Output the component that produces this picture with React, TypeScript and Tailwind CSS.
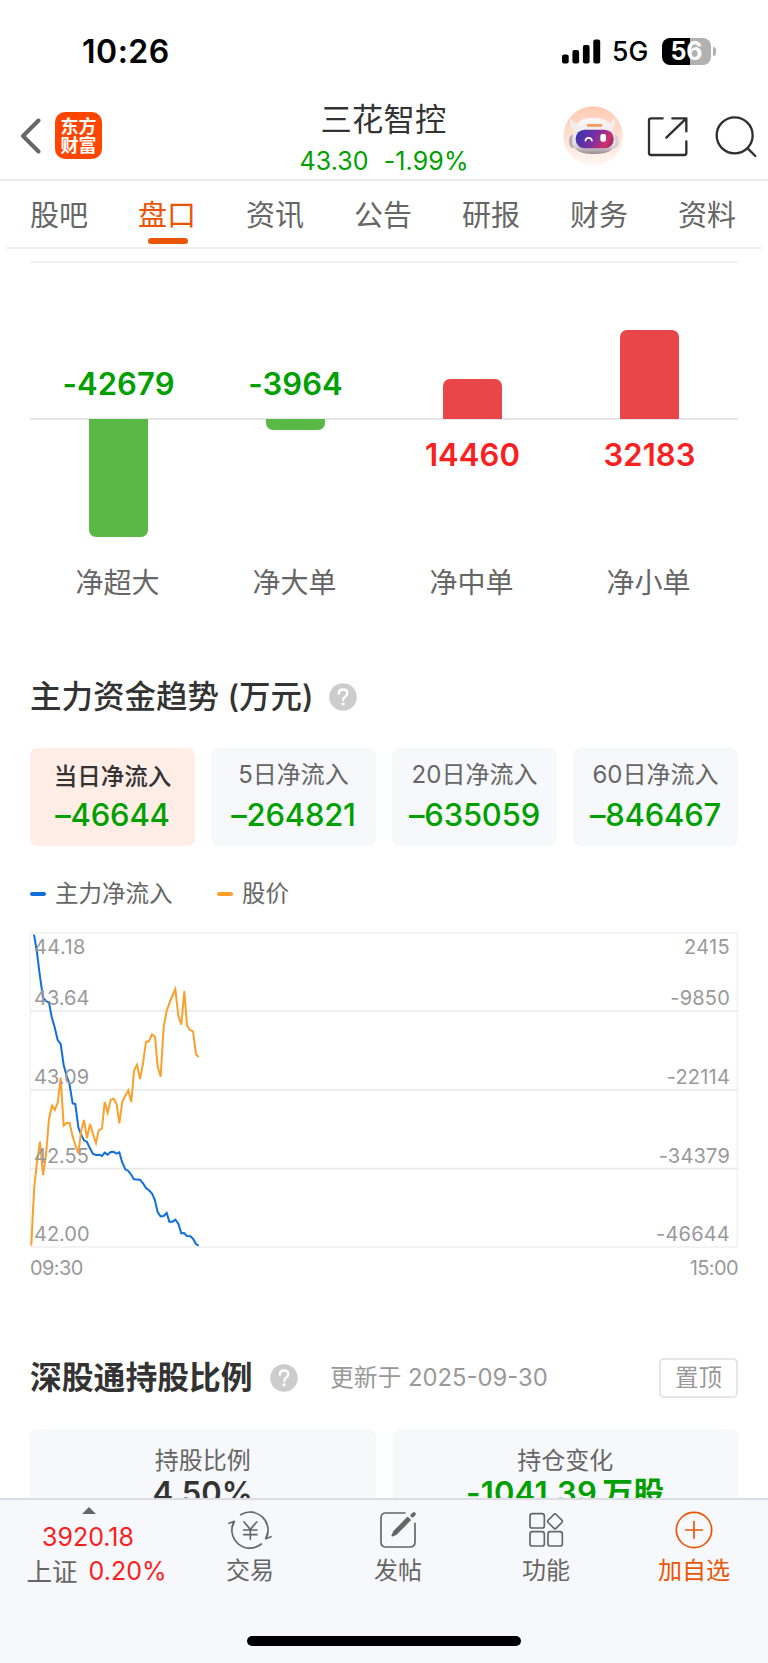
import React from "react";

const tabs = ["股吧", "盘口", "资讯", "公告", "研报", "财务", "资料"];

const flows = [
  { label: "净超大", value: "-42679", height: 118, negative: true },
  { label: "净大单", value: "-3964", height: 11, negative: true },
  { label: "净中单", value: "14460", height: 40, negative: false },
  { label: "净小单", value: "32183", height: 89, negative: false },
];

const periods = [
  { label: "当日净流入", value: "–46644", active: true },
  { label: "5日净流入", value: "–264821", active: false },
  { label: "20日净流入", value: "–635059", active: false },
  { label: "60日净流入", value: "–846467", active: false },
];

const axis = [
  ["43.64", "-9850"],
  ["43.09", "-22114"],
  ["42.55", "-34379"],
  ["42.00", "-46644"],
];

const inflow =
  "42,44 50,90 58,155 65,205 69,233 78,243 87,248 95,290 104,322 113,360 122,372 131,435 140,468 148,490 158,550 166,552 175,622 184,645 192,661 201,666 210,685 219,702 228,705 238,704 246,708 254,698 263,704 272,696 281,695 289,701 298,697 306,725 316,748 325,753 334,765 342,778 360,779 369,790 378,804 387,811 396,821 404,838 413,876 422,889 431,888 440,879 448,905 458,905 466,899 475,911 484,940 492,939 501,948 511,949 519,956 528,972 536,977";
const price =
  "34,977 38,890 43,800 51,725 60,665 69,765 78,705 87,596 96,557 104,570 113,549 122,473 131,617 140,609 149,609 158,650 166,675 175,700 184,630 192,600 201,654 210,612 219,642 228,669 236,631 246,625 254,546 263,578 272,540 281,536 290,553 298,610 307,545 316,527 325,511 334,546 342,452 351,434 360,477 369,430 378,365 387,364 396,343 405,350 413,440 422,470 431,320 440,273 448,250 457,228 466,207 475,287 484,314 493,213 501,317 510,330 519,334 528,403 536,411";

function StatusBar() {
  return (
    <div className="flex h-[96px] shrink-0 items-start pl-[82px] pr-[52px] pt-[31px] text-black">
      <div className="flex h-[42px] items-center text-[32px] font-semibold tracking-[0.5px]">10:26</div>
      <div className="ml-auto flex h-[40px] items-center">
        <svg width="39" height="25" viewBox="0 0 39 25" className="mr-[11px]">
          <rect x="0" y="15.5" width="6.7" height="9" rx="2" />
          <rect x="10.4" y="11" width="6.7" height="13.5" rx="2" />
          <rect x="20.9" y="6" width="6.7" height="18.5" rx="2" />
          <rect x="31.3" y="0.5" width="6.9" height="24" rx="2" />
        </svg>
        <span className="w-[50px] pt-[2px] text-[26.500px] font-medium">5G</span>
        <div className="flex h-[27px] w-[49px] items-center justify-center rounded-[8px] bg-linear-to-r from-black from-57% to-[#b1b1b1] to-57% text-[25px] font-bold leading-none text-white">
          56
        </div>
        <div className="ml-[2px] h-[9px] w-[3px] rounded-r-full bg-[#b1b1b1]" />
      </div>
    </div>
  );
}

function Robot() {
  return (
    <svg width="60" height="60" viewBox="0 0 180 180">
      <defs>
        <linearGradient id="halo" x1="0" y1="0" x2="0" y2="1">
          <stop offset="0" stopColor="#ffcab2" />
          <stop offset="0.7" stopColor="#ffe9df" />
          <stop offset="1" stopColor="#fff8f4" />
        </linearGradient>
        <linearGradient id="visor" x1="0" y1="0.3" x2="1" y2="0.6">
          <stop offset="0" stopColor="#3a35b0" />
          <stop offset="0.5" stopColor="#7a2fa0" />
          <stop offset="0.85" stopColor="#d02f70" />
          <stop offset="1" stopColor="#a02a60" />
        </linearGradient>
        <linearGradient id="shell" x1="0" y1="0" x2="0" y2="1">
          <stop offset="0" stopColor="#faf8f8" />
          <stop offset="0.75" stopColor="#e4dee1" />
          <stop offset="1" stopColor="#958c93" />
        </linearGradient>
      </defs>
      <circle cx="90" cy="90" r="89" fill="url(#halo)" />
      <path d="M23 36c-5 14-1 30 14 38l18-20c-16 0-27-6-32-18zM154 36c5 14 1 30-14 38l-18-20c14 0 27-6 32-18z" fill="#f2edee" />
      <ellipse cx="29" cy="106" rx="11" ry="20" fill="#b3acb4" />
      <ellipse cx="156" cy="106" rx="11" ry="20" fill="#d5ced3" />
      <path d="M36 72c4-26 24-37 54-37s56 11 60 37c10 20 10 44 2 54-14 16-40 18-60 18s-44-2-58-18c-10-12-8-34 2-54z" fill="url(#shell)" />
      <rect x="38" y="71" width="114" height="56" rx="27" fill="url(#visor)" />
      <rect x="72" y="54" width="46" height="8" rx="3" fill="#ee9b62" />
      <path d="M67 104c3-11 17-11 20 0" fill="none" stroke="#fff" strokeWidth="5" strokeLinecap="round" />
      <rect x="112" y="84" width="17" height="23" rx="6" fill="#fff" />
    </svg>
  );
}

function Header() {
  return (
    <header className="grid h-[85px] shrink-0 grid-cols-[1fr_240px_1fr] border-b-2 border-[#ececec]">
      <div className="flex h-[79px] items-center pl-[20px]">
        <svg width="22" height="36" viewBox="0 0 22 36" fill="none" stroke="#666" strokeWidth="4" strokeLinecap="round" strokeLinejoin="round">
          <path d="M18.5 2.5 3 18l15.500 15.500" />
        </svg>
        <div className="ml-[13px] flex h-[47px] w-[47px] flex-col items-center justify-center rounded-[10px] bg-[#ff4600] text-[18px] font-bold leading-[19px] text-white">
          <span>东方</span>
          <span>财富</span>
        </div>
      </div>
      <div className="flex flex-col items-center">
        <div className="flex h-[47px] items-center pr-[1px] pt-[1px] text-[31.300px] tracking-[0.2px] text-[#333]">三花智控</div>
        <div className="flex h-[37px] items-center gap-[15px] text-[25px] tracking-[0.1px] text-[#00a000]">
          <span>43.30</span>
          <span>-1.99%</span>
        </div>
      </div>
      <div className="flex h-[80px] items-center justify-end pr-[10px]">
        <Robot />
        <svg width="45" height="45" viewBox="285 53 135 135" className="ml-[22px]" fill="none" stroke="#2f2f2f" strokeWidth="7" strokeLinecap="round" strokeLinejoin="round">
          <path d="M338 66H303Q297 66 297 72V170Q297 176 303 176H403Q409 176 409 170V135M367 66H409V105M408 67 349 124" />
        </svg>
        <svg width="45" height="45" viewBox="488 50 135 135" className="ml-[23px]" fill="none" stroke="#2f2f2f" strokeWidth="7" strokeLinecap="round">
          <circle cx="553" cy="114" r="54" />
          <path d="m592 153 23 23" />
        </svg>
      </div>
    </header>
  );
}

function Tabs() {
  return (
    <nav className="mx-[6px] grid h-[68px] shrink-0 grid-cols-7 border-b-2 border-[#eee]">
      {tabs.map((t) => {
        const on = t === "盘口";
        return (
          <div key={t} className={"flex flex-col items-center text-[29px] " + (on ? "text-[#ea5504]" : "text-[#666]")}>
            <div className="flex h-[57px] items-center pr-[2px] pt-[12px]">{t}</div>
            {on && <div className="h-[6px] w-[40px] rounded-full bg-[#ea5504]" />}
          </div>
        );
      })}
    </nav>
  );
}

function FlowBars() {
  return (
    <section className="mx-[30px] mt-[12px] shrink-0 border-t-2 border-[#f2f2f2]">
      <div className="grid grid-cols-4">
        {flows.map((f) => (
          <div key={f.label} className="flex flex-col items-center text-[31px] font-semibold">
            <div className="flex h-[155px] w-full flex-col items-center justify-end">
              {f.negative ? (
                <div className="mb-[14px] flex h-[40px] items-center tracking-[0.1px] text-[#00a000]">{f.value}</div>
              ) : (
                <div className="relative top-px w-[59px] rounded-t-[7px] bg-[#e94649]" style={{ height: f.height }} />
              )}
            </div>
            <div className="flex h-[140px] w-full flex-col items-center border-t-2 border-[#e6e6ea]">
              {f.negative ? (
                <div className="-mt-[1px] w-[59px] rounded-b-[7px] bg-[#5ab946]" style={{ height: f.height }} />
              ) : (
                <div className="mt-[15px] flex h-[40px] items-center tracking-[0.1px] text-[#fa2020]">{f.value}</div>
              )}
            </div>
            <div className="flex h-[48px] items-center pr-[2px] pt-[2px] text-[28px] font-normal text-[#666]">{f.label}</div>
          </div>
        ))}
      </div>
    </section>
  );
}

function Help() {
  return (
    <svg width="28" height="28" viewBox="0 0 28 28">
      <circle cx="14" cy="14" r="13.800" fill="#ccc" />
      <path d="M9.800 10.800c0-2.600 1.700-4.300 4.300-4.300 2.500 0 4.200 1.500 4.200 3.700 0 1.800-1 2.600-2.200 3.500-1.300.9-1.900 1.600-1.900 3.300" fill="none" stroke="#fff" strokeWidth="2.300" strokeLinecap="round" />
      <circle cx="14.200" cy="20.800" r="1.600" fill="#fff" />
    </svg>
  );
}

function Trend() {
  return (
    <section className="mx-[30px] mt-[67px] shrink-0">
      <div className="flex h-[48px] items-center text-[31.500px] font-medium text-[#333]">
        <h2 className="w-[299px] whitespace-nowrap">主力资金趋势 (万元)</h2>
        <Help />
      </div>
      <div className="mt-[27px] grid grid-cols-4 gap-[16px]">
        {periods.map((p) => (
          <div key={p.label} className={"flex h-[98px] flex-col items-center rounded-[8px] " + (p.active ? "bg-[#ffede6]" : "bg-[#f7f8fb]")}>
            <div className={"flex h-[53px] items-center " + (p.active ? "pt-[4px] text-[23.500px] font-medium text-[#333]" : "text-[24px] text-[#666]")}>{p.label}</div>
            <div className="flex h-[28px] items-center text-[31px] font-medium tracking-[-0.2px] text-[#00a000]">{p.value}</div>
          </div>
        ))}
      </div>
      <div className="mt-[30px] flex h-[36px] items-center text-[23.500px] text-[#666]">
        <span className="mr-[9px] h-[4px] w-[16px] rounded-full bg-[#0f6fdc]" />
        <span className="w-[162px]">主力净流入</span>
        <span className="mr-[9px] h-[4px] w-[16px] rounded-full bg-[#fba02b]" />
        <span>股价</span>
      </div>
      <div className="relative mt-[21px] h-[315px]">
        <svg width="708" height="314" viewBox="30 39 2124 942" className="absolute left-0 top-0 overflow-visible" fill="none">
          <path d="M31 39H2152V981H31Z" stroke="#f0f0f0" strokeWidth="4" />
          <path d="M31 273H2152M31 510H2152M31 746H2152" stroke="#e9e9e9" strokeWidth="5" />
          <polyline points={inflow} stroke="#0f6fdc" strokeWidth="6" />
          <polyline points={price} stroke="#fba02b" strokeWidth="6" />
        </svg>
        <div className="relative flex h-full flex-col pl-[4px] pr-[8px] text-[20px] leading-[20px] text-[#999]">
          <div className="flex justify-between pt-[4px]">
            <span className="tracking-[0.4px]">44.18</span>
            <span className="tracking-[0.300px]">2415</span>
          </div>
          {axis.map(([l, r], i) => (
            <div key={l} className={"flex items-end justify-between " + (i === 0 ? "h-[51px]" : "h-[78.800px]")}>
              <span>{l}</span>
              <span className="tracking-[0.200px]">{r}</span>
            </div>
          ))}
        </div>
      </div>
      <div className="flex h-[40px] items-center justify-between text-[20px] tracking-[-0.6px] text-[#999]">
        <span>09:30</span>
        <span>15:00</span>
      </div>
    </section>
  );
}

function Holding() {
  return (
    <section className="mx-[30px] mt-[66px] shrink-0">
      <div className="flex h-[48px] items-center">
        <h2 className="w-[240px] whitespace-nowrap text-[31.800px] font-bold text-[#333]">深股通持股比例</h2>
        <Help />
        <span className="ml-[32px] text-[23.800px] text-[#999]">更新于 2025-09-30</span>
        <span className="ml-auto flex h-[40px] w-[79px] items-center justify-center rounded-[5px] border-2 border-[#e6e6ea] text-[23.500px] text-[#999]">置顶</span>
      </div>
      <div className="mt-[27px] grid grid-cols-2 gap-[17px]">
        <div className="flex h-[98px] flex-col items-center rounded-[8px] bg-[#f7f8fb]">
          <div className="flex h-[46px] items-end text-[24px] leading-[29px] text-[#666]">持股比例</div>
          <div className="flex h-[36px] items-center text-[31px] font-semibold text-[#333]">4.50%</div>
        </div>
        <div className="flex h-[98px] flex-col items-center rounded-[8px] bg-[#f7f8fb]">
          <div className="flex h-[46px] items-end text-[24px] leading-[29px] text-[#666]">持仓变化</div>
          <div className="flex h-[36px] items-center gap-[5px] text-[31px] font-semibold tracking-[0.200px] text-[#00a000]">
            <span>-1041.39</span>
            <span>万股</span>
          </div>
        </div>
      </div>
    </section>
  );
}

function Action({ label, color, children }: { label: string; color: string; children: React.ReactNode }) {
  return (
    <div className={"flex flex-col items-center pt-[9px] " + color}>
      <svg width="44" height="42" viewBox="-66 -63 132 126" fill="none" stroke="currentColor" strokeWidth="5" strokeLinecap="round" strokeLinejoin="round">
        {children}
      </svg>
      <div className="flex h-[38px] items-center pt-px text-[24px]">{label}</div>
    </div>
  );
}

function BottomBar() {
  return (
    <footer className="z-10 h-[165px] shrink-0 border-t-2 border-[#dcdde3] bg-[#f7f8fb]">
      <div className="grid grid-cols-[176px_148px_148px_148px_148px]">
        <div className="flex flex-col items-center pt-[7px] text-[25px]">
          <svg width="14" height="7" viewBox="0 0 14 7" className="ml-[1px]">
            <path d="M7 0 14 7H0Z" fill="#666" />
          </svg>
          <div className="mt-[7px] flex h-[34px] items-center text-[#fa2020]">3920.18</div>
          <div className="flex h-[34px] items-center gap-[11px] pl-[17px]">
            <span className="text-[25.500px] text-[#666]">上证</span>
            <span className="text-[#fa2020]">0.20%</span>
          </div>
        </div>
        <Action label="交易" color="text-[#666]">
          <path d="M-28 -46A54 54 0 0 1 48 25M34 42A54 54 0 0 1 -48 -25" />
          <path d="M53 10 47 26 63 20M-53 -10-47 -26-63 -20M-18 -24 1 -2 20 -24M1 -2V28M-19 0H21M-19 14H21" />
        </Action>
        <Action label="发帖" color="text-[#666]">
          <path d="M21 -51H-36Q-51 -51 -51 -36V36Q-51 51 -36 51H36Q51 51 51 36V-20" />
          <path d="M-17 17-12 5 29 -37 36 -30-5 12Z" fill="currentColor" />
          <path d="m43 -43 5 -5" strokeWidth="11" />
        </Action>
        <Action label="功能" color="text-[#666]">
          <rect x="-48" y="-49" width="43" height="43" rx="7" />
          <rect x="-48" y="5" width="43" height="43" rx="7" />
          <rect x="6" y="5" width="43" height="43" rx="7" />
          <rect x="10" y="-43" width="34" height="34" rx="5" transform="rotate(45 27 -26)" />
        </Action>
        <Action label="加自选" color="text-[#ea5504]">
          <circle r="53" />
          <path d="M-25 0H25M0 -25V25" />
        </Action>
      </div>
      <div className="mx-auto mt-[47px] h-[10px] w-[274px] rounded-full bg-black" />
    </footer>
  );
}

export default function App() {
  return (
    <div className="flex h-[1663px] w-[768px] flex-col overflow-hidden bg-white font-['Inter','Noto_Sans_CJK_SC',sans-serif]">
      <div className="flex h-[1498px] shrink-0 flex-col overflow-hidden">
        <StatusBar />
        <Header />
        <Tabs />
        <FlowBars />
        <Trend />
        <Holding />
      </div>
      <BottomBar />
    </div>
  );
}
